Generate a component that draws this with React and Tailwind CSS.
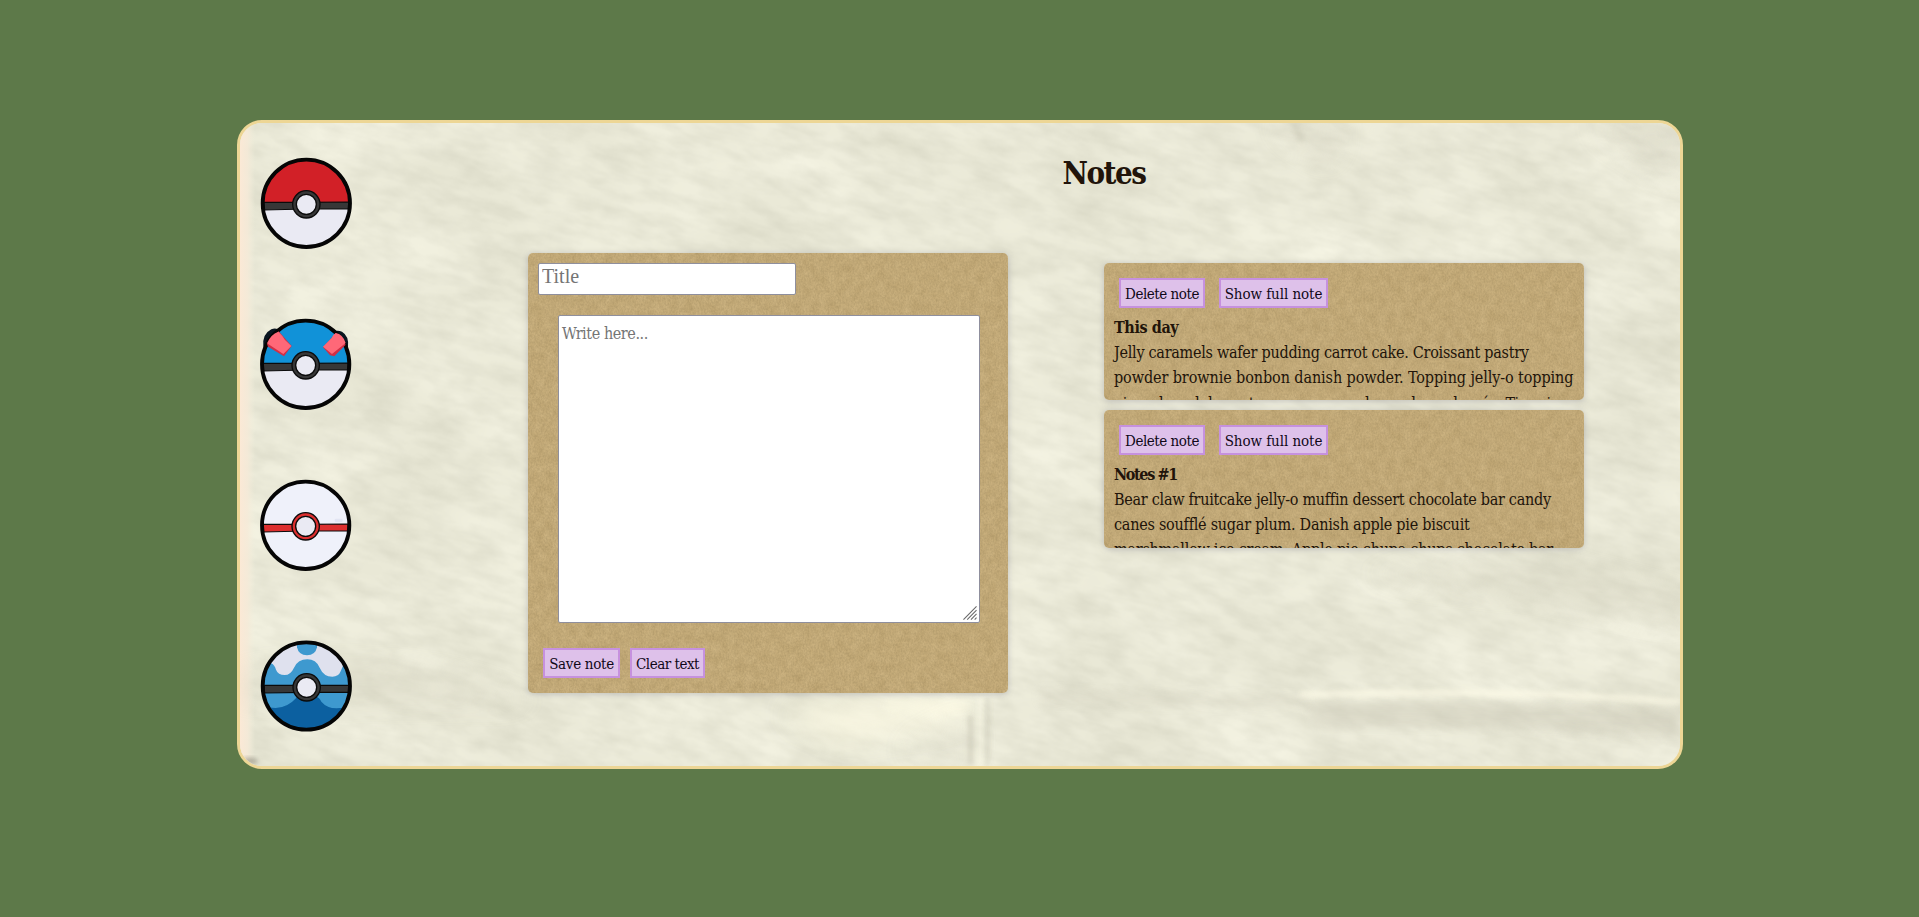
import React from "react";

function Noise({ id, base, detail, matrix, detailMatrix, turn = 0, children }) {
  return (
    <svg className="pointer-events-none absolute inset-0 h-full w-full" aria-hidden="true">
      <filter id={id} x="0" y="0" width="100%" height="100%" colorInterpolationFilters="sRGB">
        <feTurbulence type="fractalNoise" baseFrequency={base} numOctaves="3" seed="7" result="n" />
        <feColorMatrix in="n" values={matrix} result="a" />
        <feTurbulence type="fractalNoise" baseFrequency={detail} numOctaves="3" seed="3" result="m" />
        <feColorMatrix in="m" values={detailMatrix} result="b" />
        <feBlend in="b" in2="a" mode="multiply" />
      </filter>
      {turn ? (
        <rect x="-200" y="-500" width="1900" height="1600" transform={`rotate(${turn} 720 320)`} filter={`url(#${id})`} />
      ) : (
        <rect width="100%" height="100%" filter={`url(#${id})`} />
      )}
      {children}
    </svg>
  );
}

function Paper() {
  return (
    <Noise
      id="paper"
      turn={14}
      base="0.007 0.013"
      detail="0.03 0.075"
      matrix="0.09 0 0 0 0.883  0.09 0 0 0 0.879  0.1 0 0 0 0.805  0 0 0 0 1"
      detailMatrix="0.09 0 0 0 0.938  0.09 0 0 0 0.938  0.1 0 0 0 0.932  0 0 0 0 1"
    >
      <defs>
        <filter id="soft" x="-50%" y="-50%" width="200%" height="200%"><feGaussianBlur stdDeviation="5" /></filter>
        <filter id="thin" x="-300%" y="-50%" width="700%" height="200%"><feGaussianBlur stdDeviation="2.5" /></filter>
        <filter id="wide" x="-50%" y="-100%" width="200%" height="300%"><feGaussianBlur stdDeviation="14" /></filter>
        <linearGradient id="edge">
          <stop offset="0" stopColor="#fbe9d6" />
          <stop offset=".5" stopColor="#f6ead8" stopOpacity=".85" />
          <stop offset="1" stopColor="#f3efdc" stopOpacity="0" />
        </linearGradient>
      </defs>
      <rect width="15" height="650" fill="url(#edge)" />
      <path d="M1060 580 Q1250 576 1440 586 L1440 615 Q1240 600 1080 605Z" fill="#bdbaa8" opacity=".32" filter="url(#soft)" />
      <path d="M1060 569 Q1250 562 1440 576 L1440 582 Q1250 568 1060 575Z" fill="#fffce8" opacity=".6" filter="url(#thin)" />
      <path d="M800 567 Q950 572 1070 574 L1060 585 L800 580Z" fill="#bdbaa8" opacity=".2" filter="url(#soft)" />
      <path d="M540 590 Q640 570 730 580 L715 600 L600 618Z" fill="#fffce6" opacity=".75" filter="url(#wide)" />
      <path d="M640 582 L732 578 L722 592Z" fill="#fffce6" opacity=".7" filter="url(#soft)" />
      <path d="M745 575h5v68h-5z" fill="#b9b7a4" opacity=".35" filter="url(#thin)" />
      <path d="M738 575h4v68h-4z" fill="#fbf9e6" opacity=".6" filter="url(#thin)" />
      <path d="M728 592h5v50h-5z" fill="#c1beac" opacity=".5" filter="url(#thin)" />
      <path d="M660 628L730 594V640Z" fill="#bdbaa8" opacity=".22" filter="url(#wide)" />
      <path d="M0 555Q150 530 260 570L300 580L0 572Z" fill="#c2bfab" opacity=".3" filter="url(#wide)" />
      <path d="M1350 0L1440 0V60Z M1030 0L1100 0 1090 40Z" fill="#bdbaa8" opacity=".3" filter="url(#wide)" />
      <path d="M1050 0h8l8 18h-8z" fill="#b9b7a4" opacity=".3" filter="url(#thin)" />
      <path d="M1120 450L1300 440L1440 475V500L1300 470Z" fill="#c2bfab" opacity=".3" filter="url(#wide)" />
      <ellipse cx="10" cy="638" rx="8" ry="3" fill="#8c887a" opacity=".7" filter="url(#thin)" />
    </Noise>
  );
}

function Kraft({ id }) {
  return (
    <Noise
      id={id}
      base="0.12 0.1"
      detail="0.6 0.45"
      matrix="0.08 0 0 0 0.738  0.08 0 0 0 0.638  0.08 0 0 0 0.442  0 0 0 0 1"
      detailMatrix="0.15 0 0 0 0.892  0.15 0 0 0 0.892  0.16 0 0 0 0.88  0 0 0 0 1"
    />
  );
}

function Band({ cx, cy, fill, left, right }) {
  return (
    <>
      <path d={`M${cx - 127} ${left}L${cx} ${left}L${cx + 127} ${right}V${right + 21}L${cx} ${right + 21}L${cx - 127} ${left + 23}Z`} fill={fill} stroke="#0b0b0b" strokeWidth="3.5" />
      <circle cx={cx} cy={cy} r="41" fill={fill} stroke="#0b0b0b" strokeWidth="4" />
      <circle cx={cx} cy={cy} r="30" fill="#eaeaf3" stroke="#0b0b0b" strokeWidth="4" />
    </>
  );
}

function PokeBall() {
  return (
    <svg viewBox="90 141 276 276" className="size-[92px]">
      <circle cx="229" cy="280" r="131" fill="#eaeaf3" />
      <path d="M98 280a131 131 0 0 1 262 0z" fill="#d22027" />
      <Band cx={229} cy={283} fill="#373737" left={277} right={276} />
      <circle cx="229" cy="280" r="131" fill="none" stroke="#050505" strokeWidth="11.5" />
    </svg>
  );
}

function GreatBall() {
  return (
    <svg viewBox="90 624 276 276" className="size-[92px]">
      <path d="M100 710q-4-38 24-52q12-6 26 2l-30 50zM354 712q4-34-18-47q-10-5-22-2l20 45z" fill="#0a1520" />
      <circle cx="227" cy="763" r="131" fill="#eaeaf3" />
      <path d="M96 763a131 131 0 0 1 262 0z" fill="#1192d8" />
      <Band cx={227} cy={766} fill="#373737" left={760} right={759} />
      <circle cx="227" cy="763" r="131" fill="none" stroke="#050505" strokeWidth="11.5" />
      <path d="M111 702L146 664L185 708L162 739L114 710Z" fill="#d22f45" />
      <path d="M111 700Q122 673 145 665Q158 677 165 690L184 708L160 732Z" fill="#ff6878" />
      <path d="M279 712L318 669L347 704L313 739L300 736Z" fill="#d22f45" />
      <path d="M279 710L305 684Q307 675 317 669Q339 673 347 699L306 732Z" fill="#ff6878" />
    </svg>
  );
}

function PremierBall() {
  return (
    <svg viewBox="90 87 276 276" className="size-[92px]">
      <circle cx="227" cy="226" r="131" fill="#eff1fa" />
      <rect x="314" y="206" width="24" height="10" rx="4" fill="#e2e5f3" />
      <Band cx={227} cy={229} fill="#dc2f2f" left={223} right={222} />
      <circle cx="227" cy="226" r="131" fill="none" stroke="#050505" strokeWidth="11.5" />
    </svg>
  );
}

function DiveBall() {
  return (
    <svg viewBox="90 570 276 276" className="size-[92px]">
      <clipPath id="dive"><circle cx="229" cy="708" r="131" /></clipPath>
      <g clipPath="url(#dive)">
        <rect x="90" y="570" width="276" height="276" fill="#dfe1ee" />
        <path d="M201 578H261V592Q256 616 231 616Q206 616 201 592Z" fill="#3e99cf" />
        <path d="M90 640H124Q134 645 138 659Q144 675 164 675Q182 675 192 653Q204 628 232 628Q258 628 269 653Q281 680 307 680Q326 680 332 664L340 645H366V720H90Z" fill="#3e99cf" />
        <rect x="90" y="717" width="276" height="130" fill="#0c60a0" />
        <path d="M90 717H201V742Q172 774 137 774Q117 774 90 766ZM258 717H366V768Q345 775 320 775Q290 774 274 755Q268 742 258 740Z" fill="#3e99cf" />
      </g>
      <Band cx={230} cy={712} fill="#373737" left={706} right={706} />
      <circle cx="229" cy="708" r="131" fill="none" stroke="#050505" strokeWidth="11.5" />
    </svg>
  );
}

function Button({ className, children }) {
  return (
    <button className={`h-[30px] shrink-0 whitespace-nowrap border-2 border-[#c691de] bg-[#dec1ea] pt-[3px] text-center text-[15px] leading-none text-[#100818] ${className}`}>
      {children}
    </button>
  );
}

function Note({ id, height, title, titleClass, lines }) {
  return (
    <article className={`relative w-[480px] overflow-hidden rounded-[5px] ${height}`}>
      <Kraft id={id} />
      <div className="relative px-[10px] pt-[15px]">
        <div className="mb-[7px] flex gap-[14px] pl-[5px]">
          <Button className="w-[86px] tracking-[-0.47px]">Delete note</Button>
          <Button className="w-[109px] tracking-[-0.08px]">Show full note</Button>
        </div>
        <h2 className={`font-bold ${titleClass}`}>{title}</h2>
        {lines.map(([text, tracking]) => (
          <p key={text} className={`whitespace-nowrap ${tracking}`}>{text}</p>
        ))}
      </div>
    </article>
  );
}

export default function App() {
  return (
    <div className="h-[917px] bg-[#5d7949] pl-[237px] pt-[120px] font-['DejaVu_Serif_Condensed','DejaVu_Serif',serif] text-[16px] leading-[25px] text-[#21140a]">
      <main className="relative flex h-[649px] w-[1446px] overflow-hidden rounded-[25px] border-[3px] border-[#edd695] bg-[#e9e8d6]">
        <Paper />
        <nav className="relative flex shrink-0 flex-col gap-[69px] pl-5 pt-[34px]">
          <PokeBall />
          <GreatBall />
          <PremierBall />
          <DiveBall />
        </nav>
        <section className="relative ml-[176px] w-[1152px] shrink-0">
          <h1 className="h-[130px] pt-[30px] text-center text-[31px] font-bold leading-10 tracking-[-1.5px]">Notes</h1>
          <div className="flex">
            <div className="h-[440px] rounded-[5px] shadow-[0_1px_6px_rgba(90,90,120,0.3)]">
              <form className="relative h-[440px] w-[480px] overflow-hidden rounded-[5px]">
                <Kraft id="kraft-form" />
                <div className="relative flex flex-col items-start pl-[10px] pt-[10px]">
                  <input
                    placeholder="Title"
                    className="h-[32px] w-[258px] rounded-[2px] border border-[#8f8f9d] bg-white px-[3px] pb-[5px] font-['Liberation_Serif',serif] text-[20px] placeholder:text-[#757575]"
                  />
                  <div className="relative ml-5 mt-5 flex">
                    <textarea
                      placeholder="Write here..."
                      className="h-[308px] w-[422px] resize-none rounded-[2px] border border-[#8f8f9d] bg-white px-[3px] pt-[5px] text-[16px] leading-[25px] tracking-[-0.42px] placeholder:text-[#757575]"
                    />
                    <svg viewBox="0 0 15 15" className="absolute bottom-[3px] right-[3px] size-[14px]" stroke="#6b6b6b" strokeWidth="1.2">
                      <path d="M0.5 14.5L14.5 0.5M4.5 14.5L14.5 4.5M8.5 14.5L14.5 8.5M12.5 14.5L14.5 12.5" />
                    </svg>
                  </div>
                  <div className="ml-[5px] mt-[25px] flex gap-[10px]">
                    <Button className="w-[77px] tracking-[-0.3px]">Save note</Button>
                    <Button className="w-[75px] tracking-[-0.48px]">Clear text</Button>
                  </div>
                </div>
              </form>
            </div>
            <div className="ml-24 flex flex-col gap-[10px] pt-[10px]">
              <div className="rounded-[5px] shadow-[0_1px_6px_rgba(90,90,120,0.3)]">
                <Note
                  id="kraft-a"
                  height="h-[137px]"
                  title="This day"
                  titleClass="tracking-[-0.4px]"
                  lines={[
                    ["Jelly caramels wafer pudding carrot cake. Croissant pastry", "tracking-[-0.27px]"],
                    ["powder brownie bonbon danish powder. Topping jelly-o topping", "tracking-[-0.09px]"],
                    ["gingerbread dessert sesame snaps chupa chups dragée. Tiramisu", "mt-px tracking-[-0.44px]"],
                  ]}
                />
              </div>
              <div className="rounded-[5px] shadow-[0_1px_6px_rgba(90,90,120,0.3)]">
                <Note
                  id="kraft-b"
                  height="h-[138px]"
                  title="Notes #1"
                  titleClass="tracking-[-1.35px]"
                  lines={[
                    ["Bear claw fruitcake jelly-o muffin dessert chocolate bar candy", "tracking-[-0.27px]"],
                    ["canes soufflé sugar plum. Danish apple pie biscuit", "tracking-[-0.24px]"],
                    ["marshmallow ice cream. Apple pie chupa chups chocolate bar", "tracking-[-0.24px]"],
                  ]}
                />
              </div>
            </div>
          </div>
        </section>
      </main>
    </div>
  );
}
